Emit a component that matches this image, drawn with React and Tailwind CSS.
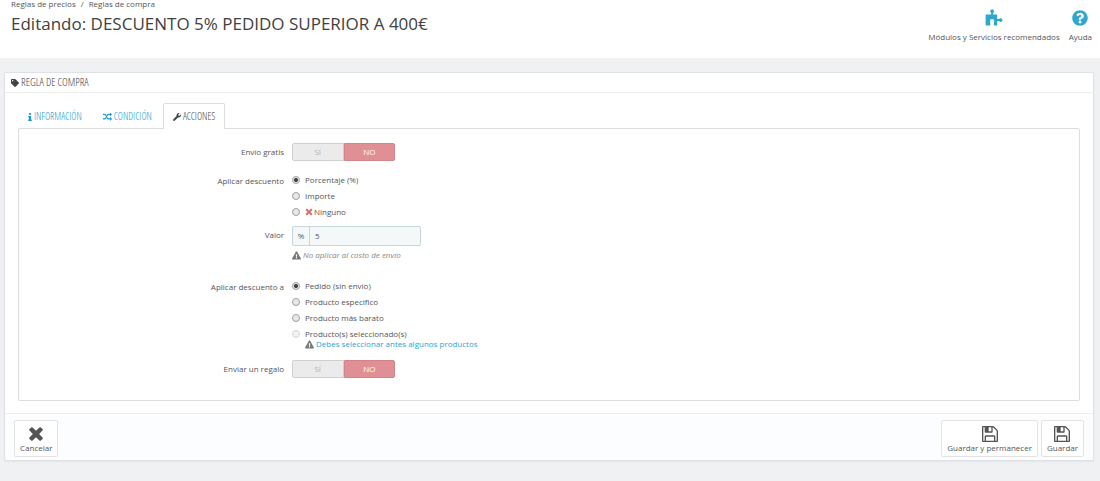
import React, { useState } from "react";
import { FaExclamationTriangle, FaQuestionCircle, FaTag, FaWrench } from "react-icons/fa";

const discountTypes = [
  { id: "percent", label: "Porcentaje (%)" },
  { id: "amount", label: "Importe" },
  { id: "none", label: "Ninguno", cross: true },
];

const discountTargets = [
  { id: "order", label: "Pedido (sin envío)" },
  { id: "specific", label: "Producto especifico" },
  { id: "cheapest", label: "Producto más barato" },
  { id: "selection", label: "Producto(s) seleccionado(s)", disabled: true },
];

const tabs = [
  { id: "info", label: "INFORMACIÓN", Icon: InfoIcon, size: "w-1 h-2" },
  { id: "conditions", label: "CONDICIÓN", Icon: ShuffleIcon, size: "w-[9px] h-2" },
  { id: "actions", label: "ACCIONES", Icon: FaWrench, size: "size-2" },
];

function CrossIcon({ className }) {
  return (
    <svg viewBox="8 264 1392 1392" fill="currentColor" className={className} aria-hidden="true">
      <path d="M1298 1322q0 40-28 68l-136 136q-28 28-68 28t-68-28l-294-294-294 294q-28 28-68 28t-68-28l-136-136q-28-28-28-68t28-68l294-294-294-294q-28-28-28-68t28-68l136-136q28-28 68-28t68 28l294 294 294-294q28-28 68-28t68 28l136 136q28 28 28 68t-28 68l-294 294 294 294q28 28 28 68z" />
    </svg>
  );
}

function FloppyIcon({ className }) {
  return (
    <svg viewBox="0 128 1536 1536" fill="currentColor" className={className} aria-hidden="true">
      <path d="M384 1536h768v-384h-768v384zm896 0h128v-896q0-14-10-38.5t-20-34.5l-281-281q-10-10-34-20t-39-10v416q0 40-28 68t-68 28h-576q-40 0-68-28t-28-68v-416h-128v1280h128v-416q0-40 28-68t68-28h832q40 0 68 28t28 68v416zm-384-928v-320q0-13-9.5-22.5t-22.5-9.5h-192q-13 0-22.5 9.5t-9.5 22.5v320q0 13 9.5 22.5t22.5 9.5h192q13 0 22.5-9.5t9.5-22.5zm640 32v928q0 40-28 68t-68 28h-1344q-40 0-68-28t-28-68v-1344q0-40 28-68t68-28h928q40 0 88 20t76 48l280 280q28 28 48 76t20 88z" />
    </svg>
  );
}

function InfoIcon({ className }) {
  return (
    <svg viewBox="0 128 640 1408" fill="currentColor" className={className} aria-hidden="true">
      <path d="M640 1344v128q0 26-19 45t-45 19h-512q-26 0-45-19t-19-45v-128q0-26 19-45t45-19h64v-384h-64q-26 0-45-19t-19-45v-128q0-26 19-45t45-19h384q26 0 45 19t19 45v576h64q26 0 45 19t19 45zm-128-1152v192q0 26-19 45t-45 19h-256q-26 0-45-19t-19-45v-192q0-26 19-45t45-19h256q26 0 45 19t19 45z" />
    </svg>
  );
}

function ShuffleIcon({ className }) {
  return (
    <svg viewBox="0 128 1792 1536" fill="currentColor" className={className} aria-hidden="true">
      <path d="M666 481q-60 92-137 273-22-45-37-72.5t-40.5-63.5-51-56.5-63-35-81.5-14.5h-224q-14 0-23-9t-9-23v-192q0-14 9-23t23-9h224q250 0 410 225zm1126 799q0 14-9 23l-320 320q-9 9-23 9-13 0-22.5-9.5t-9.5-22.5v-192q-32 0-85 .5t-81 1-73-1-71-5-64-10.5-63-18.5-58-28.5-59-40-55-53.5-56-69.5q59-93 136-273 22 45 37 72.5t40.5 63.5 51 56.5 63 35 81.5 14.5h256v-192q0-14 9-23t23-9q12 0 24 10l319 319q9 9 9 23zm0-896q0 14-9 23l-320 320q-9 9-23 9-13 0-22.5-9.5t-9.5-22.5v-192h-256q-48 0-87 15t-69 45-51 61.5-45 77.5q-32 62-78 171-29 66-49.5 111t-54 105-64 100-74 83-90 68.5-106.5 42-128 16.5h-224q-14 0-23-9t-9-23v-192q0-14 9-23t23-9h224q48 0 87-15t69-45 51-61.5 45-77.5q32-62 78-171 29-66 49.5-111t54-105 64-100 74-83 90-68.5 106.5-42 128-16.5h256v-192q0-14 9-23t23-9q12 0 24 10l319 319q9 9 9 23z" />
    </svg>
  );
}

function PuzzleIcon({ className }) {
  return (
    <svg viewBox="0 0 18 18" fill="currentColor" className={className} aria-hidden="true">
      <path d="M.6 5.6h5.5V3.8a1.8 1.8 0 1 1 2 0v1.8h4.1v4.5h1.9a1.8 1.8 0 1 1 0 2h-1.9v4.5H8.9v-3l.3-1.6a2.1 2.1 0 1 0-4.2 0l.3 1.6v3H.6z" />
    </svg>
  );
}

function Row({ label, htmlFor, children }) {
  return (
    <div role="group" aria-label={label} className="flex gap-2">
      <div className="w-1/4 text-right text-[8px] leading-[18px]">
        {htmlFor ? <label htmlFor={htmlFor}>{label}</label> : label}
      </div>
      <div className="flex-1">{children}</div>
    </div>
  );
}

function YesNo({ name, value, onChange }) {
  return (
    <div className="flex w-[103px] h-[18px] text-[8px] leading-4 text-center">
      <label
        className={`relative w-1/2 border cursor-pointer rounded-l-xs ${
          value ? "bg-[#92d097] border-[#7cb882] text-white" : "bg-[#ebebeb] border-[#cfcfcf] text-[#b5b5b5]"
        }`}
      >
        <input type="radio" name={name} checked={value} onChange={() => onChange(true)} className="sr-only" />
        SÍ
      </label>
      <label
        className={`relative w-1/2 border cursor-pointer rounded-r-xs ${
          value ? "bg-[#ebebeb] border-[#cfcfcf] text-[#b5b5b5]" : "bg-[#e08f95] border-[#d0858b] text-white"
        }`}
      >
        <input type="radio" name={name} checked={!value} onChange={() => onChange(false)} className="sr-only" />
        NO
      </label>
    </div>
  );
}

function RadioList({ name, options, value, onChange }) {
  return (
    <div className="text-[8px]">
      {options.map((option) => (
        <label key={option.id} className="flex items-center h-4 leading-4">
          <input
            type="radio"
            name={name}
            checked={value === option.id}
            disabled={option.disabled}
            onChange={() => onChange(option.id)}
            className="appearance-none size-2 mr-[5px] rounded-full border border-[#a0a0a0] bg-[#e9e9e9] checked:bg-[radial-gradient(circle,#444_40%,#e9e9e9_55%)] disabled:border-[#d5d5d5] disabled:bg-[#f3f3f3]"
          />
          {option.cross && <CrossIcon className="size-2 mr-px text-[#d9737b]" />}
          {option.label}
        </label>
      ))}
    </div>
  );
}

function FooterButton({ Icon, children }) {
  return (
    <button
      type="button"
      className="flex flex-col items-center gap-px px-[5px] pt-[5px] pb-[3px] border border-[#e3e3e3] rounded-xs bg-white text-[8px] leading-[10px] cursor-pointer"
    >
      <Icon className="size-4 text-[#555]" />
      {children}
    </button>
  );
}

export default function App() {
  const [activeTab, setActiveTab] = useState("actions");
  const [freeShipping, setFreeShipping] = useState(false);
  const [sendGift, setSendGift] = useState(false);
  const [type, setType] = useState("percent");
  const [target, setTarget] = useState("order");
  const [amount, setAmount] = useState("5");

  return (
    <div className="min-h-screen bg-[#eff1f2] text-[#555] font-['Open_Sans',sans-serif]">
      <header className="flex justify-between h-[58px] pl-[11px] pr-2 bg-white">
        <div>
          <nav className="flex gap-[5px] text-[8px] leading-2">
            <a href="#precios">Reglas de precios</a>
            <span>/</span>
            <a href="#compra">Reglas de compra</a>
          </nav>
          <h1 className="mt-1 text-[17px] leading-6 text-[#414141]">
            Editando: DESCUENTO 5% PEDIDO SUPERIOR A 400€
          </h1>
        </div>
        <div className="flex gap-[9px] pt-[9px] text-[8px] leading-3">
          <a href="#modulos" className="flex flex-col items-center gap-1">
            <PuzzleIcon className="size-[18px] text-[#31a8cb]" />
            Módulos y Servicios recomendados
          </a>
          <a href="#ayuda" className="flex flex-col items-center gap-1">
            <FaQuestionCircle className="h-[18px] w-4 text-[#31a8cb]" />
            Ayuda
          </a>
        </div>
      </header>

      <main className="pt-[14px] pl-1 pr-[6px]">
        <div className="rounded-xs border border-[#dfe1e6] bg-white shadow-xs">
          <h2 className="flex items-center gap-[2px] h-5 px-[6px] border-b border-[#eee] text-[11px] text-[#444] font-['Open_Sans_Condensed_Light','Open_Sans_Condensed',sans-serif]">
            <FaTag className="size-2" />
            REGLA DE COMPRA
          </h2>

          <div className="px-[13px] pt-[10px] pb-3">
            <div role="tablist" className="flex gap-px -mb-px">
              {tabs.map(({ id, label, Icon, size }) => (
                <button
                  key={id}
                  type="button"
                  role="tab"
                  aria-selected={activeTab === id}
                  onClick={() => setActiveTab(id)}
                  className={`flex items-center gap-[2px] h-[26px] px-[9px] border border-b-0 rounded-t-xs text-[10px] cursor-pointer font-['Open_Sans_Condensed_Light','Open_Sans_Condensed',sans-serif] ${
                    activeTab === id ? "border-[#ddd] bg-white text-[#444]" : "border-transparent text-[#1b9bd0]"
                  }`}
                >
                  <Icon className={size} />
                  {label}
                </button>
              ))}
            </div>

            <form className="h-[273px] pt-[14px] border border-[#ddd] rounded-xs" onSubmit={(e) => e.preventDefault()}>
              <Row label="Envío gratis">
                <YesNo name="free-shipping" value={freeShipping} onChange={setFreeShipping} />
              </Row>

              <div className="mt-[11px]">
                <Row label="Aplicar descuento">
                  <RadioList name="type" options={discountTypes} value={type} onChange={setType} />
                </Row>
              </div>

              <div className="mt-[6px]">
                <Row label="Valor" htmlFor="amount">
                  <div className="flex w-[129px] h-5 border border-[#c7d6db] rounded-xs bg-[#f5f8f9] text-[8px]">
                    <span className="flex items-center justify-center w-[17px] border-r border-[#c7d6db]">%</span>
                    <input
                      id="amount"
                      type="text"
                      value={amount}
                      onChange={(e) => setAmount(e.target.value)}
                      className="flex-1 min-w-0 px-[5px] outline-none"
                    />
                  </div>
                  <p className="flex items-center gap-[2px] mt-[3px] text-[8px] leading-3 italic text-[#888]">
                    <FaExclamationTriangle className="size-[9px] text-[#777]" />
                    No aplicar al costo de envío
                  </p>
                </Row>
              </div>

              <div className="mt-[17px]">
                <Row label="Aplicar descuento a">
                  <RadioList name="target" options={discountTargets} value={target} onChange={setTarget} />
                  <a href="#productos" className="flex items-center gap-[2px] w-fit ml-[13px] -mt-[3px] text-[8px] leading-[10px] text-[#2ba3d4]">
                    <FaExclamationTriangle className="size-[9px] text-[#777]" />
                    Debes seleccionar antes algunos productos
                  </a>
                </Row>
              </div>

              <div className="mt-[11px]">
                <Row label="Enviar un regalo">
                  <YesNo name="send-gift" value={sendGift} onChange={setSendGift} />
                </Row>
              </div>
            </form>
          </div>

          <footer className="flex justify-between px-[9px] pt-[6px] pb-[3px] border-t border-[#eee] bg-[#fcfdfe]">
            <FooterButton Icon={CrossIcon}>Cancelar</FooterButton>
            <div className="flex gap-[3px]">
              <FooterButton Icon={FloppyIcon}>Guardar y permanecer</FooterButton>
              <FooterButton Icon={FloppyIcon}>Guardar</FooterButton>
            </div>
          </footer>
        </div>
      </main>
    </div>
  );
}
